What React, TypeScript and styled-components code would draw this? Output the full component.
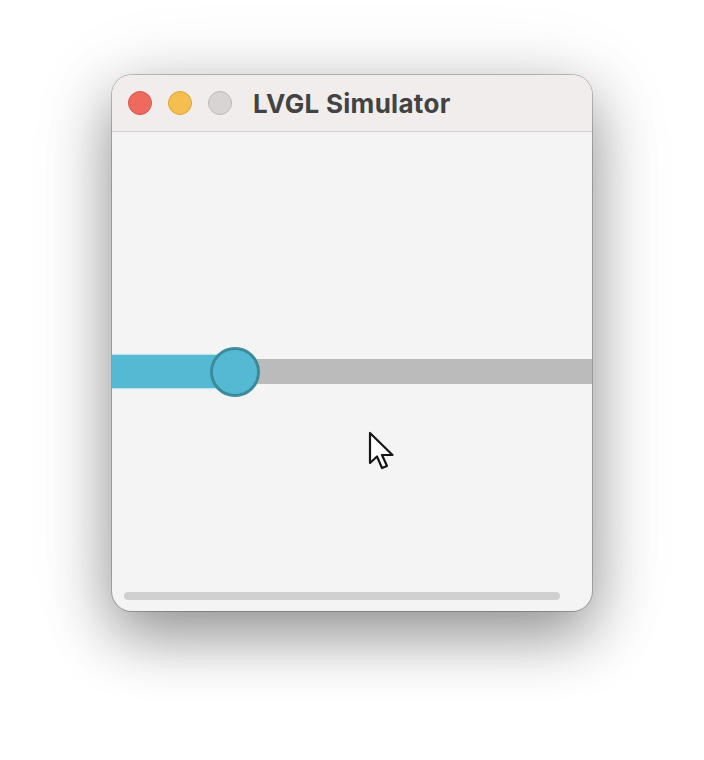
import React from "react";
import styled, { createGlobalStyle } from "styled-components";

const Global = createGlobalStyle`
  html, body { margin: 0; padding: 0; background: #ffffff; }
  body { font-family: Inter, "Liberation Sans", sans-serif; }
`;

const Page = styled.div`
  width: 704px;
  height: 760px;
  padding: 75px 0 0 112px;
  box-sizing: border-box;
  position: relative;
  overflow: hidden;
`;

const Window = styled.div`
  width: 480px;
  height: 536px;
  border-radius: 20px;
  overflow: hidden;
  display: flex;
  flex-direction: column;
  background: #f4f4f4;
  box-shadow: 0 0 0 1px rgba(0, 0, 0, 0.22), 0 24px 60px rgba(0, 0, 0, 0.38),
    0 10px 90px rgba(0, 0, 0, 0.12);
`;

const TitleBar = styled.div`
  height: 56px;
  flex: none;
  display: flex;
  align-items: center;
  padding-left: 16px;
  gap: 16px;
  background: #f0edec;
  border-bottom: 1px solid #d2d0cf;
`;

const Light = styled.span<{ $fill: string; $edge: string }>`
  width: 24px;
  height: 24px;
  border-radius: 50%;
  box-sizing: border-box;
  background: ${(p) => p.$fill};
  border: 1px solid ${(p) => p.$edge};
  flex: none;
`;

const Title = styled.span`
  margin-left: 5px;
  font-family: Inter, "Liberation Sans", sans-serif;
  font-weight: 700;
  font-size: 26px;
  color: #434343;
  letter-spacing: 0.3px;
`;

const Content = styled.div`
  flex: 1;
  position: relative;
  display: flex;
  align-items: center;
`;

const Slider = styled.div`
  position: relative;
  width: 100%;
  height: 50px;
  display: flex;
  align-items: center;
`;

const Track = styled.div`
  width: 100%;
  height: 25px;
  background: #bbbbbb;
  position: relative;
  display: flex;
  align-items: center;
`;

const Indicator = styled.div`
  height: 33px;
  background: #55b9d3;
  box-shadow: 0 0 1px 1px rgba(150, 215, 232, 0.6);
`;

const Knob = styled.div`
  position: absolute;
  top: 0;
  width: 50px;
  height: 50px;
  border-radius: 50%;
  box-sizing: border-box;
  background: #55b9d3;
  border: 3px solid #3b8b9b;
  transform: translateX(-50%);
  filter: blur(0.4px);
`;

const ScrollBar = styled.div`
  position: absolute;
  left: 12px;
  right: 32px;
  bottom: 11px;
  height: 8px;
  border-radius: 4px;
  background: #d0d0d0;
`;

const Cursor = styled.svg`
  position: absolute;
  left: 368px;
  top: 431px;
`;

export default function App() {
  const value = 123;
  return (
    <Page>
      <Global />
      <Window>
        <TitleBar>
          <Light $fill="#ee6a5f" $edge="#d55447" />
          <Light $fill="#f5bf4f" $edge="#d9a53b" />
          <Light $fill="#d7d4d3" $edge="#bdb9b8" />
          <Title>LVGL Simulator</Title>
        </TitleBar>
        <Content>
          <Slider>
            <Track>
              <Indicator style={{ width: value }} />
            </Track>
            <Knob style={{ left: value }} />
          </Slider>
          <ScrollBar />
        </Content>
      </Window>
      <Cursor width="30" height="42" viewBox="0 0 30 42">
        <path
          d="M2 2 L2 32 L9 25.5 L14 37 L19 35 L14 24 L24.5 24 Z"
          fill="#ffffff"
          stroke="#151515"
          strokeWidth="2.2"
          strokeLinejoin="round"
        />
      </Cursor>
    </Page>
  );
}
